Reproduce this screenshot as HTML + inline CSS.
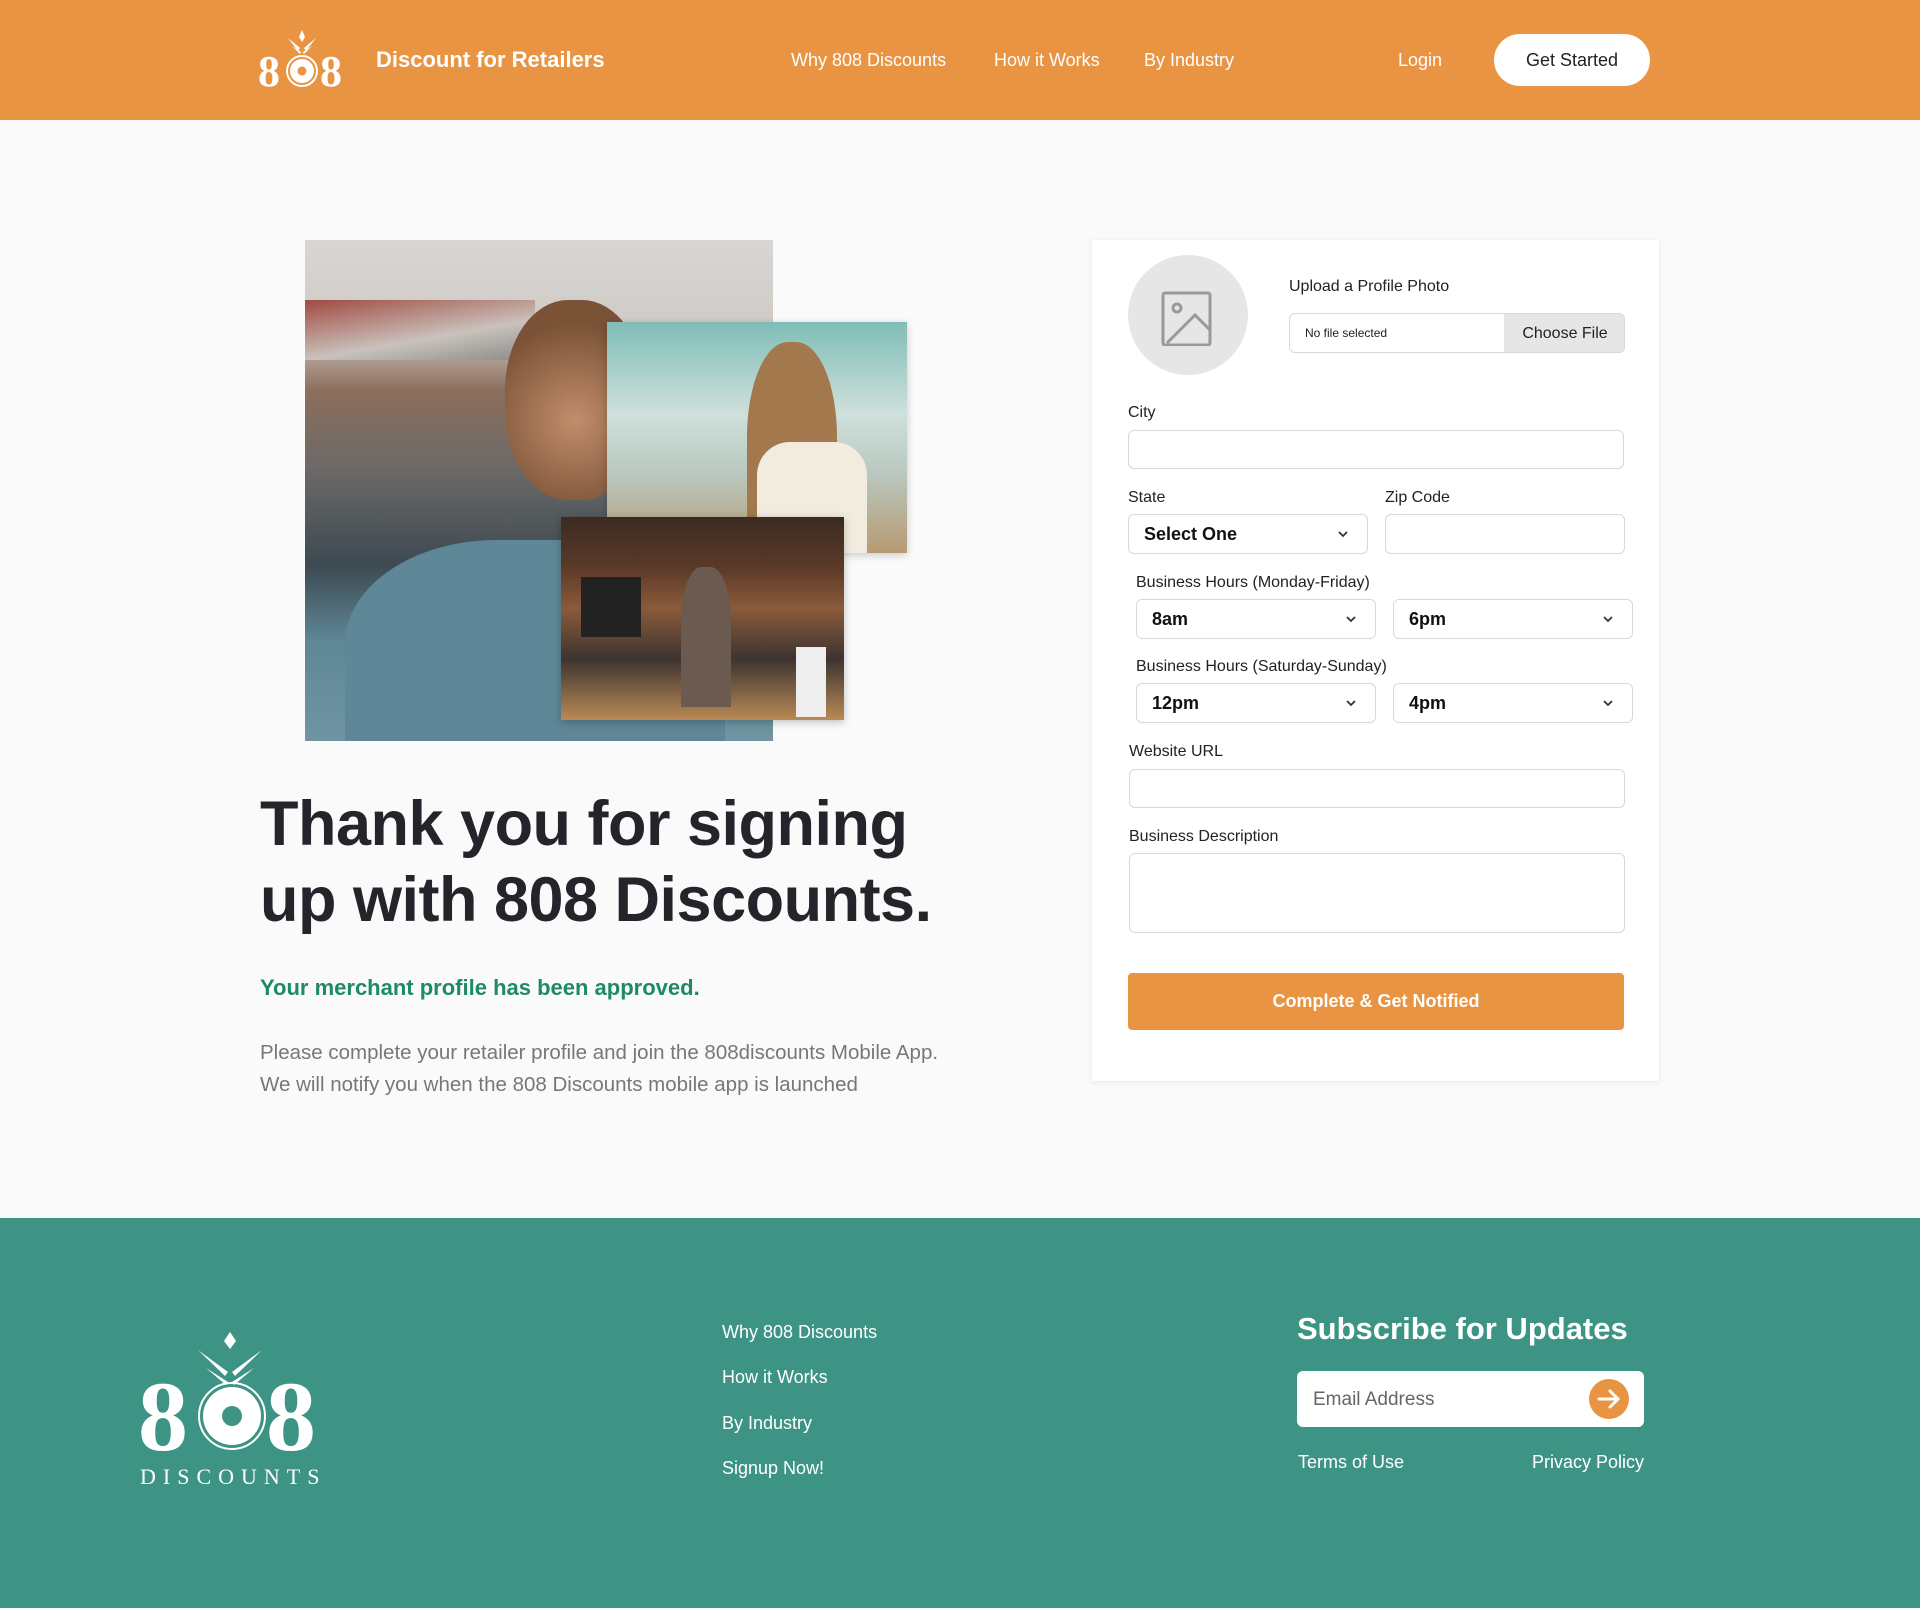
<!DOCTYPE html>
<html><head><meta charset="utf-8"><style>
*{box-sizing:border-box;margin:0;padding:0}
body{width:1920px;height:1608px;background:#fafafa;font-family:"Liberation Sans",sans-serif;position:relative;overflow:hidden;color:#222}
.a{position:absolute}
header{position:absolute;left:0;top:0;width:1920px;height:120px;background:#e89443}
.nav{color:#fff;font-size:18px;top:50px}
.lbl{position:absolute;font-size:16px;color:#222}
.inp{position:absolute;border:1px solid #d8d8d8;border-radius:6px;background:#fff}
.sel{position:absolute;border:1px solid #d8d8d8;border-radius:6px;background:#fff;font-size:18px;font-weight:bold;color:#111;padding-left:15px;line-height:38px}
.sel svg{position:absolute;right:18px;top:15px}
footer{position:absolute;left:0;top:1218px;width:1920px;height:390px;background:#3d9484}
.fl{position:absolute;color:#fff;font-size:18px;left:722px}
</style></head><body>
<header>
<svg class="a" style="left:258px;top:28px" width="88" height="62" viewBox="0 0 88 62">
<g fill="#fff"><path d="M44 2l3 7-3 5-3-5z"/><path d="M30 10l12 10-2 3z"/><path d="M58 10l-12 10 2 3z"/><path d="M34 18l9 6-1 2z"/><path d="M54 18l-9 6 1 2z"/></g>
<text x="0" y="58" font-size="44" font-weight="bold" font-family="Liberation Serif" fill="#fff">8</text>
<text x="62" y="58" font-size="44" font-weight="bold" font-family="Liberation Serif" fill="#fff">8</text>
<circle cx="44" cy="43" r="15" fill="none" stroke="#fff" stroke-width="2"/><circle cx="44" cy="43" r="12" fill="#fff"/><circle cx="44" cy="43" r="4.5" fill="#e89443"/>
</svg>
<div class="a" style="left:376px;top:47px;color:#fff;font-size:22px;font-weight:bold">Discount for Retailers</div>
<div class="a nav" style="left:791px">Why 808 Discounts</div>
<div class="a nav" style="left:994px">How it Works</div>
<div class="a nav" style="left:1144px">By Industry</div>
<div class="a nav" style="left:1398px">Login</div>
<div class="a" style="left:1494px;top:34px;width:156px;height:52px;border-radius:26px;background:#fff;color:#222;font-size:18px;text-align:center;line-height:52px">Get Started</div>
</header>

<div class="a" style="left:305px;top:240px;width:468px;height:501px;background:linear-gradient(180deg,#d9d6d3 0%,#cfcac6 18%,#8c6e5c 30%,#6d6a68 45%,#3d4a52 65%,#5f8796 80%,#6f95a3 100%);overflow:hidden">
<div class="a" style="left:0;top:60px;width:230px;height:60px;background:linear-gradient(170deg,#a04a40,#c9c2bc 60%,#8a8a88)"></div>
<div class="a" style="left:200px;top:60px;width:140px;height:200px;border-radius:45%;background:radial-gradient(circle at 50% 60%,#c28d6c,#7a5236 70%)"></div>
<div class="a" style="left:40px;top:300px;width:380px;height:260px;border-radius:40% 40% 0 0;background:#5e8797"></div>
</div>
<div class="a" style="left:607px;top:322px;width:300px;height:231px;background:linear-gradient(180deg,#7fbdb6 0%,#cfe0dc 40%,#b9c9c0 65%,#b79a72 100%);box-shadow:0 2px 8px rgba(0,0,0,.2);overflow:hidden">
<div class="a" style="left:140px;top:20px;width:90px;height:211px;border-radius:45% 45% 0 0;background:#a3784c"></div>
<div class="a" style="left:150px;top:120px;width:110px;height:111px;background:#f2ece0;border-radius:30% 30% 0 0"></div>
</div>
<div class="a" style="left:561px;top:517px;width:283px;height:203px;background:linear-gradient(180deg,#3b2a22 0%,#5b3a28 25%,#8a5a3a 45%,#3d3430 70%,#b98a55 100%);box-shadow:0 2px 8px rgba(0,0,0,.25);overflow:hidden">
<div class="a" style="left:20px;top:60px;width:60px;height:60px;background:#222"></div>
<div class="a" style="left:120px;top:50px;width:50px;height:140px;border-radius:40% 40% 0 0;background:#6b5a50"></div>
<div class="a" style="left:235px;top:130px;width:30px;height:70px;background:#eee"></div>
</div>

<div class="a" style="left:260px;top:786px;font-size:63px;font-weight:bold;line-height:76px;color:#23252a;letter-spacing:-0.5px">Thank you for signing<br>up with 808 Discounts.</div>
<div class="a" style="left:260px;top:975px;font-size:22px;font-weight:bold;color:#1f8a66">Your merchant profile has been approved.</div>
<div class="a" style="left:260px;top:1037px;font-size:20.5px;line-height:32px;color:#777">Please complete your retailer profile and join the 808discounts Mobile App.<br>We will notify you when the 808 Discounts mobile app is launched</div>

<div class="a" style="left:1092px;top:240px;width:567px;height:841px;background:#fff;box-shadow:0 1px 6px rgba(0,0,0,.08)"></div>
<div class="a" style="left:1128px;top:255px;width:120px;height:120px;border-radius:50%;background:#e6e6e6"></div>
<svg class="a" style="left:1160px;top:290px" width="56" height="56" viewBox="0 0 56 56" fill="none" stroke="#999" stroke-width="3"><rect x="3" y="3" width="47" height="52" rx="2"/><circle cx="17" cy="18" r="4"/><path d="M7 53L35 25L50 40"/></svg>
<div class="lbl" style="left:1289px;top:278px">Upload a Profile Photo</div>
<div class="inp" style="left:1289px;top:313px;width:336px;height:40px;overflow:hidden"><span class="a" style="left:15px;top:12px;font-size:12px">No file selected</span><div class="a" style="left:214px;top:0;width:122px;height:40px;background:#e6e6e6;font-size:16px;text-align:center;line-height:40px">Choose File</div></div>
<div class="lbl" style="left:1128px;top:404px">City</div>
<div class="inp" style="left:1128px;top:430px;width:496px;height:39px"></div>
<div class="lbl" style="left:1128px;top:489px">State</div>
<div class="sel" style="left:1128px;top:514px;width:240px;height:40px">Select One<svg width="12" height="8" viewBox="0 0 12 8"><path d="M2 2l4 4 4-4" stroke="#333" stroke-width="1.8" fill="none"/></svg></div>
<div class="lbl" style="left:1385px;top:489px">Zip Code</div>
<div class="inp" style="left:1385px;top:514px;width:240px;height:40px"></div>
<div class="lbl" style="left:1136px;top:574px">Business Hours (Monday-Friday)</div>
<div class="sel" style="left:1136px;top:599px;width:240px;height:40px">8am<svg width="12" height="8" viewBox="0 0 12 8"><path d="M2 2l4 4 4-4" stroke="#333" stroke-width="1.8" fill="none"/></svg></div>
<div class="sel" style="left:1393px;top:599px;width:240px;height:40px">6pm<svg width="12" height="8" viewBox="0 0 12 8"><path d="M2 2l4 4 4-4" stroke="#333" stroke-width="1.8" fill="none"/></svg></div>
<div class="lbl" style="left:1136px;top:658px">Business Hours (Saturday-Sunday)</div>
<div class="sel" style="left:1136px;top:683px;width:240px;height:40px">12pm<svg width="12" height="8" viewBox="0 0 12 8"><path d="M2 2l4 4 4-4" stroke="#333" stroke-width="1.8" fill="none"/></svg></div>
<div class="sel" style="left:1393px;top:683px;width:240px;height:40px">4pm<svg width="12" height="8" viewBox="0 0 12 8"><path d="M2 2l4 4 4-4" stroke="#333" stroke-width="1.8" fill="none"/></svg></div>
<div class="lbl" style="left:1129px;top:743px">Website URL</div>
<div class="inp" style="left:1129px;top:769px;width:496px;height:39px"></div>
<div class="lbl" style="left:1129px;top:828px">Business Description</div>
<div class="inp" style="left:1129px;top:853px;width:496px;height:80px"></div>
<div class="a" style="left:1128px;top:973px;width:496px;height:57px;background:#e89443;border-radius:4px;color:#fff;font-size:18px;font-weight:bold;text-align:center;line-height:57px">Complete &amp; Get Notified</div>

<footer>
<svg class="a" style="left:138px;top:110px" width="190" height="160" viewBox="0 0 190 160">
<g fill="#fff"><path d="M92 4l6 9-6 8-6-8z"/><path d="M60 22l30 22-3 4z"/><path d="M124 22l-30 22 3 4z"/><path d="M68 40l22 14-2 3z"/><path d="M116 40l-22 14 2 3z"/></g>
<text x="0" y="122" font-size="100" font-weight="bold" font-family="Liberation Serif" fill="#fff">8</text>
<text x="128" y="122" font-size="100" font-weight="bold" font-family="Liberation Serif" fill="#fff">8</text>
<circle cx="94" cy="88" r="33" fill="none" stroke="#fff" stroke-width="2"/><circle cx="94" cy="88" r="29" fill="#fff"/><circle cx="94" cy="88" r="10" fill="#3d9484"/>
<text x="2" y="156" font-size="22" letter-spacing="7" fill="#fff" font-family="Liberation Serif">DISCOUNTS</text>
</svg>
<div class="fl" style="top:104px">Why 808 Discounts</div>
<div class="fl" style="top:149px">How it Works</div>
<div class="fl" style="top:195px">By Industry</div>
<div class="fl" style="top:240px">Signup Now!</div>
<div class="a" style="left:1297px;top:93px;color:#fff;font-size:31px;font-weight:bold">Subscribe for Updates</div>
<div class="a" style="left:1297px;top:153px;width:347px;height:56px;background:#fff;border-radius:6px"><span class="a" style="left:16px;top:18px;font-size:19px;color:#666">Email Address</span>
<svg class="a" style="left:292px;top:8px" width="40" height="40" viewBox="0 0 40 40"><circle cx="20" cy="20" r="20" fill="#e89443"/><path d="M10 20h19M21 12l8 8-8 8" stroke="#fff" stroke-width="3" fill="none" stroke-linecap="round"/></svg></div>
<div class="a" style="left:1298px;top:234px;color:#fff;font-size:18px">Terms of Use</div>
<div class="a" style="left:1527px;top:234px;width:117px;text-align:right;color:#fff;font-size:18px;white-space:nowrap">Privacy Policy</div>
</footer>
</body></html>
